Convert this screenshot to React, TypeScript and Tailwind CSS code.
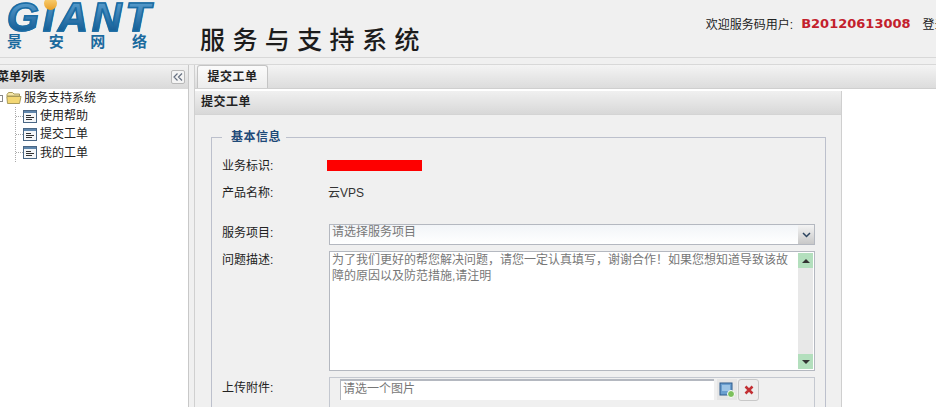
const CJK = "font-['Liberation_Sans','Noto_Sans_CJK_SC',sans-serif]";

const MENU_ITEMS = ["使用帮助", "提交工单", "我的工单"];

function FolderIcon() {
  return (
    <svg width="16" height="14" viewBox="0 0 16 14" className="shrink-0">
      <path d="M1 3.5 L2.5 1.5 H6.5 L8 3 H13.5 V5 H1 Z" fill="#f6e7a8" stroke="#a89a5a" strokeWidth="1" />
      <path d="M0.8 5.5 H15 L13.5 12.5 H1.5 Z" fill="#f3d774" stroke="#a89a5a" strokeWidth="1" />
    </svg>
  );
}

function PageIcon() {
  return (
    <svg width="14" height="13" viewBox="0 0 14 13" className="shrink-0">
      <rect x="0.5" y="0.5" width="13" height="12" fill="#f4f6f8" stroke="#4a6785" />
      <rect x="1" y="1" width="12" height="2" fill="#5f86ac" />
      <path d="M3 5.5 H8 M3 7.5 H11 M3 9.5 H9" stroke="#333333" strokeWidth="1" />
    </svg>
  );
}

function FormRow({ label, children, className, labelClass }: { label: string; children: React.ReactNode; className: string; labelClass?: string }) {
  return (
    <div className={`flex ${className}`}>
      <div className={`w-[107px] shrink-0 text-[12px] leading-[16px] text-[#222] ${labelClass ?? ""}`}>{label}</div>
      {children}
    </div>
  );
}

export default function App() {
  return (
    <div className={`flex h-[407px] w-[936px] flex-col overflow-hidden bg-[#f0f0f0] ${CJK}`}>
      {/* header */}
      <div className="flex h-[58px] shrink-0 border-b border-[#d8d8d8]">
        <div className="relative ml-[7px] w-[156px] shrink-0">
          <div className="h-[33px] bg-gradient-to-b from-[#5aa0d0] to-[#0f5a92] bg-clip-text pt-[1px] font-['Liberation_Sans'] text-[41px] leading-[32px] font-bold tracking-[4px] text-transparent italic [-webkit-text-stroke:1.5px_#1a6ca4]">
            GIANT
          </div>
          <div className="absolute top-[-3px] left-[37px] h-[13px] w-[13px] rounded-full bg-gradient-to-b from-[#fbd67a] to-[#e9a020]" />
          <div className="flex w-[140px] justify-between text-[15px] leading-[18px] font-bold text-[#1b6a9e]">
            <span>景</span>
            <span>安</span>
            <span>网</span>
            <span>络</span>
          </div>
        </div>
        <div className="ml-[37px] pt-[22px] font-['Noto_Sans_CJK_SC',sans-serif] text-[25px] leading-[32px] font-medium tracking-[7.4px] whitespace-nowrap text-[#1c1c1c]">
          服务与支持系统
        </div>
        <div className="ml-[279px] flex items-start pt-[16px] whitespace-nowrap">
          <span className="pt-[1px] text-[12px] leading-[16px] text-[#222]">欢迎服务码用户:</span>
          <span className="ml-[8px] font-['DejaVu_Sans'] text-[13px] leading-[16px] font-bold text-[#c3202c]">B20120613008</span>
          <span className="ml-[12px] pt-[1px] text-[12px] leading-[16px] text-[#222]">登录</span>
        </div>
      </div>

      <div className="mt-[6px] flex min-h-0 flex-1 border-t border-[#d8d8d8]">
        {/* menu panel */}
        <div className="w-[189px] shrink-0 border-r border-[#c8c8c8] bg-white">
          <div className="flex h-[24px] items-center justify-between bg-gradient-to-b from-[#f2f2f2] to-[#d9d9d9] pr-[3px]">
            <span className="-ml-[3px] text-[12px] font-bold text-[#222]">菜单列表</span>
            <div className="flex h-[14px] w-[14px] items-center justify-center rounded-[2px] border border-[#b8b8b8] bg-[#f4f4f4]">
              <svg width="10" height="8" viewBox="0 0 10 8">
                <path d="M4.5 0.5 L1 4 L4.5 7.5 M9 0.5 L5.5 4 L9 7.5" fill="none" stroke="#667080" strokeWidth="1.2" />
              </svg>
            </div>
          </div>
          <div>
            <div className="flex h-[18px] items-center text-[12px] text-[#222]">
              <div className="-ml-[4px] h-[7px] w-[7px] shrink-0 border border-[#888] bg-white" />
              <div className="ml-[3px]">
                <FolderIcon />
              </div>
              <span className="ml-[2px]">服务支持系统</span>
            </div>
            <div className="ml-[15px] border-l border-dotted border-[#aaa]">
              {MENU_ITEMS.map((item) => (
                <div key={item} className="flex h-[18.3px] items-center text-[12px] text-[#222]">
                  <div className="w-[7px] border-t border-dotted border-[#aaa]" />
                  <PageIcon />
                  <span className="ml-[3px]">{item}</span>
                </div>
              ))}
            </div>
          </div>
        </div>

        {/* main area */}
        <div className="ml-[5px] min-w-0 flex-1 border-l border-[#d0d0d0] bg-white">
          <div className="flex h-[24px] items-end border-b border-[#cfcfcf] bg-gradient-to-b from-[#f4f4f4] to-[#dcdcdc] pl-[2px]">
            <div className="flex h-[23px] w-[71px] items-center justify-center rounded-t-[3px] border border-b-0 border-[#c4c4c4] bg-gradient-to-b from-[#fbfbfb] to-[#ececec] text-[12px] font-bold tracking-[0.5px] text-[#222]">
              提交工单
            </div>
          </div>
          <div className="mt-[2px] w-[647px] border-r border-[#cfcfcf] bg-[#f0f0f0] pb-[20px]">
            <div className="flex h-[24px] items-center border-b border-[#d4d4d4] bg-gradient-to-b from-[#f0f0f0] to-[#d8d8d8] pb-[2px] pl-[6px] text-[12px] font-bold tracking-[0.5px] text-[#222]">
              提交工单
            </div>
            <div className="mt-[22px] ml-[16px] w-[615px] border border-[#bcc0cc] pr-[10px] pl-[10px]">
              <div className="-mt-[9px] w-fit bg-[#f0f0f0] pr-[5px] pl-[9px] text-[12px] leading-[16px] font-bold tracking-[0.5px] text-[#1f4a78]">
                基本信息
              </div>
              <FormRow label="业务标识:" className="mt-[13px]">
                <div className="mt-[2px] -ml-[2px] h-[11px] w-[95px] bg-[#fe0000]" />
              </FormRow>
              <FormRow label="产品名称:" className="mt-[11px]">
                <div className="-ml-[1px] text-[12px] leading-[16px] text-[#333]">云VPS</div>
              </FormRow>
              <FormRow label="服务项目:" className="mt-[23px]" labelClass="pt-[1px]">
                <div className="flex h-[21px] w-[486px] border border-[#b4b8c0] bg-gradient-to-b from-[#f2f5f8] to-white">
                  <div className="flex-1 pl-[2px] text-[12px] leading-[15px] text-[#777]">请选择服务项目</div>
                  <div className="flex w-[16px] items-center justify-center bg-gradient-to-b from-[#f4f4f4] to-[#c8c8c8]">
                    <svg width="9" height="6" viewBox="0 0 9 6">
                      <path d="M1 1 L4.5 4.5 L8 1" fill="none" stroke="#2c4460" strokeWidth="1.5" />
                    </svg>
                  </div>
                </div>
              </FormRow>
              <FormRow label="问题描述:" className="mt-[6px]" labelClass="pt-[1px]">
                <div className="flex h-[120px] w-[486px] border border-[#b4b8c0] bg-white">
                  <div className="min-w-0 flex-1 pr-[9px] pl-[2px] text-[12px] leading-[16px] text-[#777]">
                    为了我们更好的帮您解决问题，请您一定认真填写，谢谢合作！如果您想知道导致该故障的原因以及防范措施,请注明
                  </div>
                  <div className="my-[1px] mr-[1px] flex w-[15px] shrink-0 flex-col justify-between bg-[#e8e8e8]">
                    <div className="flex h-[15px] items-center justify-center bg-[#b3dfbd]">
                      <div className="h-0 w-0 border-x-[4px] border-b-[4px] border-x-transparent border-b-[#333]" />
                    </div>
                    <div className="flex h-[15px] items-center justify-center bg-[#b3dfbd]">
                      <div className="h-0 w-0 border-x-[4px] border-t-[4px] border-x-transparent border-t-[#333]" />
                    </div>
                  </div>
                </div>
              </FormRow>
              <FormRow label="上传附件:" className="mt-[6px] pb-[8px]" labelClass="pt-[3px]">
                <div className="flex h-[32px] w-[486px] items-start border border-[#c4c8d0] pl-[10px]">
                  <div className="mt-[1px] h-[21px] w-[374px] border-t-2 border-l border-[#b4b8c0] bg-white pl-[2px] text-[12px] leading-[16px] text-[#777]">
                    请选一个图片
                  </div>
                  <div className="mt-[1px] ml-[3px] flex h-[21px] w-[20px] items-center justify-center bg-[#e6e6e6]">
                    <svg width="16" height="16" viewBox="0 0 16 16">
                      <rect x="1" y="1" width="12" height="12" fill="#6b9fd0" stroke="#2c5a8c" />
                      <rect x="3" y="3" width="8" height="6" fill="#9cc4e6" />
                      <circle cx="12" cy="12" r="3.5" fill="#7cc05c" stroke="#ffffff" strokeWidth="1" />
                    </svg>
                  </div>
                  <div className="mt-[1px] ml-[1px] flex h-[22px] w-[21px] items-center justify-center rounded-[3px] border border-[#c8c8c8] bg-[#ededed]">
                    <svg width="10" height="10" viewBox="0 0 10 10">
                      <path d="M1.5 1.5 L8.5 8.5 M8.5 1.5 L1.5 8.5" stroke="#c22f33" strokeWidth="2.5" />
                    </svg>
                  </div>
                </div>
              </FormRow>
            </div>
          </div>
        </div>
      </div>
    </div>
  );
}
